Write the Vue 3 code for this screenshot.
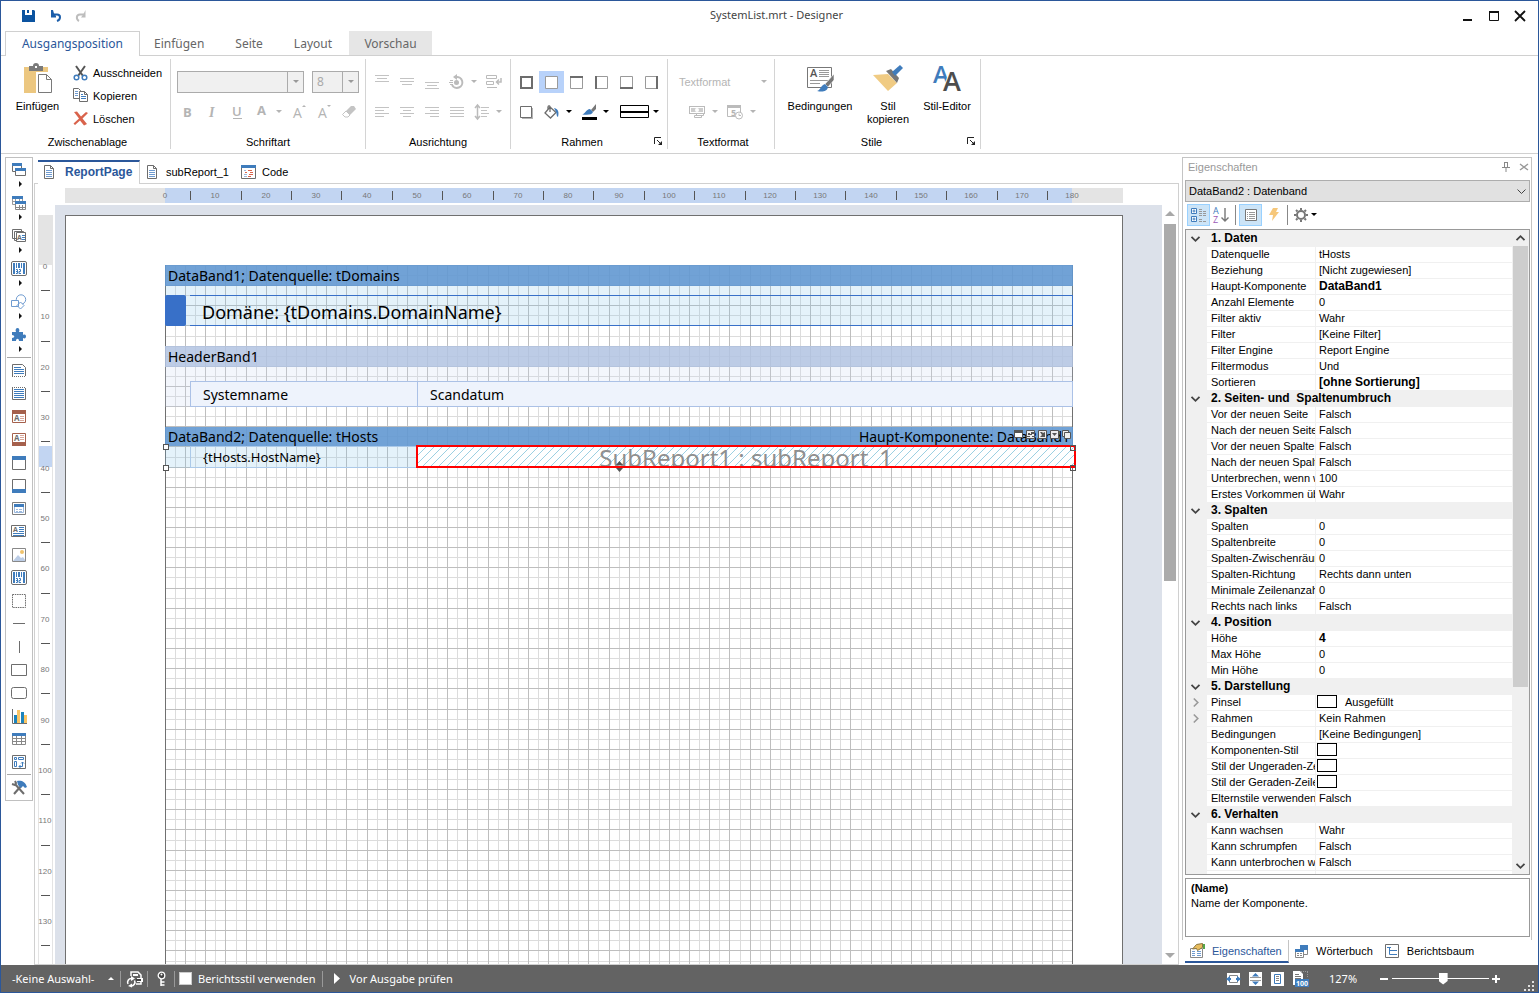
<script setup>
import { h, ref } from 'vue'

const G = '#6d6d6d'
const B = '#3f7cbc'
const L = '#c3c3c3'

const lines = (list, color, y0 = 1) =>
  list.map(([x, w], i) => `<path fill="${color}" d="M${x} ${y0 + i * 3}h${w}v1h-${w}z"/>`).join('')
const box = (t, r, b, l) =>
  `<path fill="#fff" stroke="#9a9a9a" d="M1.5 1.5h12v12h-12z"/>` +
  (t ? `<path fill="${G}" d="M1 1h13v2h-13z"/>` : '') +
  (r ? `<path fill="${G}" d="M12 1h2v13h-2z"/>` : '') +
  (b ? `<path fill="${G}" d="M1 12h13v2h-13z"/>` : '') +
  (l ? `<path fill="${G}" d="M1 1h2v13h-2z"/>` : '')
const glyph = (s, x, y, size, fill, extra = '') =>
  `<text x="${x}" y="${y}" font-family="Open Sans, sans-serif" font-size="${size}" fill="${fill}" ${extra}>${s}</text>`
const bold = 'font-weight="700"'
const barcode = `<rect x=".5" y=".5" width="15" height="14" rx="1.5" fill="#fff" stroke="${G}"/><path fill="${B}" d="M2 2h2v11h-2zM5 2h1v5h-1zM7 2h2v5h-2zM10 2h1v5h-1zM12 2h2v11h-2z"/><path stroke="${B}" fill="none" d="M5 8.500h1.500v4h-1.500M8 8.500h1.500v2h-1.500v2h2M5 10.500h1"/>`
const doc = `<path fill="#fff" stroke="${G}" d="M1.500.5h6l3 3v10h-9z"/><path fill="none" stroke="${G}" d="M7.500.5v3h3"/><path stroke="#6f9bd0" d="M3 5.500h6M3 7.500h6M3 9.500h6M3 11.500h6"/>`

const icons = {
  save: [13, 12, `<path fill="#0b53a0" d="M0 0h3v5h7V0h2l1 1v11H0z"/><path fill="#0b53a0" d="M5 0h2v3H5z"/>`],
  undo: [12, 13, `<path fill="none" stroke="#1c5eaa" stroke-width="2" d="M2 4.500h5c4 0 4 5 0 6.500"/><path fill="#1c5eaa" d="M1 0h2l1 3.500L6 6v1.500H1z"/>`],
  redo: [12, 13, `<path fill="none" stroke="#bdbdbd" stroke-width="2" d="M9 4.500H5c-4 0-4 5-1 6.500"/><path fill="#bdbdbd" d="M10.500 0v7.500H6L8.500 4z"/>`],
  min: [12, 12, `<path fill="#111" d="M1 9h9v2H1z"/>`],
  max: [12, 12, `<path fill="none" stroke="#111" d="M1.500 2.500h9v8h-9z"/><path fill="#111" d="M1 1h10v2H1z"/>`],
  close: [12, 12, `<path stroke="#111" stroke-width="1.800" d="M1 1l10 10M11 1L1 11"/>`],
  paste: [32, 32, `<path fill="#ecc780" d="M2 4h24v26H2z"/><path fill="#7a7a7a" d="M7 3h4a3 3 0 0 1 6 0h4v5H7z"/><path fill="#fff" d="M13 3h2v2h-2z"/><path fill="#fff" stroke="#fff" stroke-width="4" d="M16 11h9l5 5v14H16z"/><path fill="#fff" stroke="#7a7a7a" d="M16.500 11.500h8l5 5v13h-13zM24.500 11.500v5h5"/>`],
  cut: [16, 16, `<path fill="none" stroke="#555" stroke-width="2" d="M3 1l7 10M12 1L5 11"/><circle cx="3.500" cy="12.500" r="2.300" fill="#fff" stroke="${B}" stroke-width="1.500"/><circle cx="11.500" cy="12.500" r="2.300" fill="#fff" stroke="${B}" stroke-width="1.500"/>`],
  copy: [16, 15, `<path fill="#fff" stroke="${G}" d="M.5.5h5l2 2v8h-7z"/><path stroke="#6f9bd0" d="M2 3.500h3M2 5.500h3M2 7.500h3"/><path fill="#fff" stroke="${G}" d="M6.500 3.500h5l3 3v7h-8zM11.500 3.500v3h3"/><path stroke="${B}" d="M8 6.500h2M8 8.500h5M8 10.500h5"/>`],
  del: [16, 16, `<path fill="#d9634c" d="M1 1l3-.5 4 5L13 1l2 1-5.500 5.500L14 13l-3 1.500-4-5L2 14l-1.500-1.500L6 7.500z"/>`],
  drop: [6, 4, `<path fill="currentColor" d="M0 0h6L3 3z"/>`],
  bold: [16, 16, glyph('B', 4, 13, 13, '#b4b4b4', bold)],
  italic: [16, 16, `<text x="5" y="13" font-family="Liberation Serif, serif" font-size="14" font-style="italic" font-weight="700" fill="#b4b4b4">I</text>`],
  under: [16, 16, glyph('U', 3, 12, 13, '#b4b4b4', 'font-weight="600"') + `<path fill="#b4b4b4" d="M4 14h9v1H4z"/>`],
  color: [16, 16, glyph('A', 3, 11, 13, '#b4b4b4', bold)],
  grow: [16, 16, glyph('A', 2, 14, 14, '#b4b4b4') + `<path fill="#b4b4b4" d="M11 3h4L13 1z"/>`],
  shrink: [16, 16, glyph('A', 2, 14, 14, '#b4b4b4') + `<path fill="#b4b4b4" d="M11 1h4l-2 2z"/>`],
  eraser: [16, 16, `<path fill="#c4c4c4" d="M10 2h3l2 3-6 6-4-4z"/><path fill="#fff" stroke="#c4c4c4" d="M5 7l4 4-2 2H4l-2.500-2.500z"/>`],
  vtop: [16, 16, lines([[1, 14], [3, 10], [1, 14]], L, 1)],
  vmid: [16, 16, lines([[1, 14], [1, 14], [3, 10]], L, 4)],
  vbot: [16, 16, lines([[1, 14], [3, 10], [1, 14]], L, 8)],
  rot: [16, 16, `<path fill="none" stroke="#bbb" stroke-width="2" d="M7 3a5.500 5.500 0 1 1-4 8"/><path fill="#bbb" d="M4 3l4-3v6z"/><circle cx="7.500" cy="8.500" r="2.500" fill="#bbb"/><path stroke="#bbb" d="M1 6.500h3M0 8.500h4M1 10.500h3"/>`],
  wrap: [16, 16, `<path fill="none" stroke="#bbb" d="M.5 1.500h10v3H.5zM.5 7.500h7v3h-7zM1 13.500h10"/><path fill="none" stroke="#bbb" stroke-width="1.500" d="M15 4v4h-4M13 5.500L10.500 8l2.500 2.500"/>`],
  left: [16, 16, lines([[1, 14], [1, 9], [1, 14], [1, 9]], L, 3)],
  center: [16, 16, lines([[1, 14], [4, 8], [1, 14], [4, 8]], L, 3)],
  right: [16, 16, lines([[1, 14], [6, 9], [1, 14], [6, 9]], L, 3)],
  just: [16, 16, lines([[1, 14], [1, 14], [1, 14], [1, 14]], L, 3)],
  spacing: [16, 16, `<path fill="none" stroke="#bbb" stroke-width="1.500" d="M3.500 2v12M1 4l2.500-3L6 4M1 12l2.500 3L6 12"/><path stroke="#c3c3c3" d="M7 3.500h8M7 6.500h6M7 9.500h8M7 12.500h6"/>`],
  ball: [15, 15, `<path fill="#fff" stroke="${G}" stroke-width="2" d="M2 2h11v11H2z"/>`],
  bnone: [15, 15, box()],
  bt: [15, 15, box(1)],
  bl: [15, 15, box(0, 0, 0, 1)],
  bb: [15, 15, box(0, 0, 1)],
  br: [15, 15, box(0, 1)],
  shadow: [15, 15, `<path fill="#b4b4b4" d="M3 3h11v11H3z"/><path fill="#fff" stroke="${G}" d="M1.500 1.500h11v11h-11z"/>`],
  fill: [16, 15, `<path fill="#fff" stroke="${G}" stroke-width="1.300" d="M6 2l6 5.500L6.500 13 1 8zM6 7V1.500C5 0 3.500 1 4 4"/><path fill="${B}" d="M10 3c5 1 5 5 4 9-2-1-1-4-2-5z"/>`],
  pen: [16, 16, `<path fill="#777" d="M15 0v5l-3 3-2-2z"/><path fill="${B}" d="M9 5l3 3c-1 3-5 3-11 2.500 3-.5 4-5 8-5.500z"/><path d="M1 13h15v3H1z"/>`],
  lstyle: [30, 14, `<path fill="#fff" stroke="#000" d="M.5.5h28v12H.5z"/><path d="M1 6h28v2H1z"/>`],
  launch: [9, 9, `<path fill="none" stroke="#222" d="M.5 7V.5H7"/><path stroke="#222" d="M3 3l4 4"/><path fill="#222" d="M8 4v4H4z"/>`],
  money: [17, 16, `<path fill="#bbb" d="M0 2h16v8H0z"/><path fill="#fff" d="M1 3h14v6H1z"/><path fill="#ccc" d="M2 4h12v4H2z"/><circle cx="8" cy="6" r="2" fill="#fff"/><path fill="#fff" stroke="#bbb" d="M7.500 9.500h7v2h-7zM5.500 11.500h7v2h-7z"/>`],
  date: [17, 16, `<path fill="#fff" stroke="#bbb" d="M.5 1.500h13v11H.5z"/><path fill="#bbb" d="M0 1h14v3H0z"/>` + glyph('5', 4, 12, 9, '#b4b4b4', bold) + `<circle cx="12" cy="11.500" r="3.500" fill="#fff" stroke="#bbb"/><path fill="none" stroke="#bbb" d="M12 9.500v2h2"/>`],
  cond: [32, 32, `<path fill="#fff" stroke="#777" d="M3.500 4.500h24v20h-24z"/>` + glyph('A', 6, 14, 11, '#555', 'font-weight="600"') + `<path stroke="#999" d="M15 7.500h10M15 9.500h10M15 11.500h10M15 13.500h10M6 17.500h18M6 20.500h10"/><path fill="#777" stroke="#fff" stroke-width=".6" d="M30 11v6l-6 7-3-3z"/><path fill="${B}" d="M21 21l3 3c-1 5-6 5-11 4 4-1 3-5 8-7z"/>`],
  brush: [32, 32, `<path fill="#f0cb83" d="M1 12l15-1 9 9-9 8z"/><path fill="#777" d="M14 8l5-2 8 9-2 5z"/><path fill="${B}" d="M20 9l8-7 3 3-8 8z"/>`],
  style: [32, 32, glyph('A', 2, 20, 24, B, 'font-weight="600"') + glyph('A', 12, 28, 27, '#4d4d4d', 'font-weight="600" stroke="#fff" stroke-width="2" paint-order="stroke"')],
  doc: [12, 14, doc],
  code: [15, 14, `<path fill="#fff" stroke="${G}" d="M.5.5h14v13H.5z"/><path fill="${B}" d="M0 0h15v3H0z"/><path stroke="#d9634c" d="M7 5.500h4M4 7.500h2M9 7.500h3M8 9.500h4M7 11.500h3"/><path stroke="#9bb8dc" d="M3 5.500h2M3 9.500h3M3 11.500h3"/>`],
  arrow: [6, 6, `<path fill="#111" d="M2 0l3 3-3 3z"/>`],
  bands: [16, 16, `<path fill="#fff" stroke="${G}" d="M1.500 1.500h9v8h-9z"/><path fill="${B}" d="M1 1h10v3H1z"/><path fill="#fff" stroke="${G}" d="M4.500 6.500h10v7h-10z"/><path fill="${B}" d="M4 6h11v3H4z"/>`],
  cross: [16, 16, `<path fill="#fff" stroke="#999" d="M1.500 1.500h10v8h-10zM2 6.500h9M4.500 4v5M8.500 4v5"/><path fill="${B}" d="M1 1h11v3H1z"/><path fill="#fff" stroke="#888" d="M4.500 7.500h10v7h-10zM5 12.500h9M8.500 10v5M11.500 10v5"/><path fill="${B}" d="M4 6h11v3H4z"/>`],
  comps: [16, 16, `<path fill="#fff" stroke="${G}" d="M1.500 1.500h9v9h-9zM3.500 3.500h9v9h-9z"/><path fill="#fff" stroke="${G}" d="M5.500 4.500h9v9h-9z"/>` + glyph('A', 6, 12, 7, G, bold) + `<path stroke="${B}" d="M11 7.500h3M11 9.500h3M11 11.500h3"/>`],
  barcode: [16, 15, barcode],
  shapes: [16, 16, `<circle cx="10" cy="5.500" r="4.700" fill="#fff" stroke="#6f9bd0"/><path fill="#fff" stroke="#6f9bd0" d="M.5 6.500h7v6h-7zM9.500 8l3.500 3.500-3.500 3.500L6 11.500z"/>`],
  puzzle: [16, 16, `<path fill="${B}" d="M1 5h4c-1-2 0-4 1.500-4S9 3 8 5h4v3c2-1 3 0 3 1.500S14 12 12 11v3H8c0-3-3-3-3 0H1v-3c3 0 3-3 0-3z"/>`],
  rtitle: [16, 15, `<path fill="#fff" stroke="${G}" d="M1.500 13V1.500h10l3 3V13"/><path stroke="${G}" stroke-dasharray="1 1" d="M1 13.500h14"/><path stroke="${B}" d="M3 4.500h7M3 6.500h10M3 8.500h10M3 10.500h10"/>`],
  rsum: [16, 15, `<path fill="#fff" stroke="${G}" d="M1.500 2v11.500h13V2"/><path stroke="${G}" stroke-dasharray="1 1" d="M1 1.500h14"/><path stroke="${B}" d="M3 3.500h10M3 5.500h10M3 7.500h10M3 9.500h10M3 11.500h10"/>`],
  phead: [16, 15, `<path fill="#fff" stroke="#a5604c" d="M1.500 1.500h13v12h-13z"/><path fill="#a5604c" d="M1 1h14v4H1z"/>` + glyph('A', 3, 12, 8, G, bold) + `<path stroke="#d9a89b" d="M9 7.500h4M9 9.500h4M9 11.500h4"/>`],
  pfoot: [16, 15, `<path fill="#fff" stroke="#a5604c" d="M1.500 1.500h13v12h-13z"/><path fill="#a5604c" d="M1 10h14v4H1z"/>` + glyph('A', 3, 9, 8, G, bold) + `<path stroke="#d9a89b" d="M9 3.500h4M9 5.500h4M9 7.500h4"/>`],
  head: [16, 16, `<path fill="#fff" stroke="${G}" d="M1.500 1.500h13v13h-13z"/><path fill="${B}" d="M1 1h14v4H1z"/>`],
  foot: [16, 16, `<path fill="#fff" stroke="${G}" d="M1.500 1.500h13v13h-13z"/><path fill="${B}" d="M1 11h14v4H1z"/>`],
  child: [16, 15, `<path fill="#fff" stroke="#7d7d7d" d="M1.500 1.500h13v12h-13z"/><path fill="#fff" stroke="#9bb8dc" d="M3.500 3.500h9v8h-9z"/><path fill="${B}" d="M3 3h10v3H3z"/><path stroke="#9bb8dc" d="M5 8.500h2M8 8.500h3M5 10.500h2M8 10.500h3"/>`],
  text: [16, 15, `<path fill="#fff" stroke="${G}" d="M.5 1.500h14v11H.5z"/>` + glyph('A', 2, 8, 7, G, bold) + `<path stroke="${B}" d="M8 3.500h5M8 5.500h5M8 7.500h5M2 9.500h11M2 11.500h11"/>`],
  image: [16, 16, `<path fill="#fff" stroke="#888" d="M1.500 1.500h13v13h-13z"/><circle cx="11" cy="5" r="2" fill="#f0c36d"/><path fill="#bccde6" d="M2 14l5-6 3 3 2-1 2 3v1z"/>`],
  panel: [16, 16, `<path fill="none" stroke="${G}" stroke-dasharray="1.500 .8" d="M1.500 1.500h13v13h-13z"/>`],
  hline: [16, 16, `<path fill="${G}" d="M2 7h12v1H2z"/>`],
  vline: [16, 16, `<path fill="${G}" d="M8 2h1v12H8z"/>`],
  rect: [16, 16, `<path fill="#fff" stroke="${G}" d="M.5 2.500h15v11H.5z"/>`],
  round: [16, 16, `<rect x=".5" y="2.500" width="15" height="11" rx="2" fill="#fff" stroke="${G}"/>`],
  chart: [16, 16, `<path fill="#1c84bd" d="M3 7h3v8H3zM10 4h3v11h-3z"/><path fill="#fbc564" d="M6 2h3v13H6zM13 7h3v8h-3z"/><path fill="none" stroke="${G}" d="M1.500 1v14.500H16"/>`],
  table: [16, 16, `<path fill="#fff" stroke="#888" d="M1.500 3.500h13v10h-13zM1 7.500h13M1 10.500h13M5.500 4v9M10.500 4v9"/><path fill="${B}" d="M1 2h14v3H1z"/>`],
  sub: [16, 16, `<path fill="#fff" stroke="${G}" d="M1.500 1.500h13v13h-13z"/><path fill="none" stroke="${B}" d="M3.500 3.500h2v2h-2zM7.500 3.500h5v2h-5zM3.500 7.500h2v5h-2zM8 12.500h3.500V8M10 9.500L11.500 8 13 9.500M9.500 11L8 12.500 9.500 14"/>`],
  tools: [16, 16, `<path stroke="${G}" stroke-width="2" d="M4 4l9 10"/><path fill="none" stroke="${G}" stroke-width="2" d="M1 4l3 1 1-2L4 1"/><path stroke="${G}" stroke-width="2" d="M10 6L3 14"/><path fill="${B}" d="M6 1c4-1 8 0 10 6l-2 1-2-2-2 2-3-3z"/>`],
  pin: [8, 10, `<path fill="none" stroke="#888" d="M2.500 0v5.500M5.500 0v5.500M2 .5h4M0 5.500h8M4 6v4"/>`],
  x: [8, 8, `<path stroke="#999" stroke-width="1.400" d="M0 1l8 6M8 1L0 7"/>`],
  cat: [17, 16, `<path fill="#fff" stroke="${B}" d="M1.500 1.500h5v5h-5zM1.500 9.500h5v5h-5z"/><path stroke="${B}" d="M2.500 4h3M4 2.500v3M2.500 12h3M4 10.500v3"/><path stroke="#999" stroke-dasharray="3 1" d="M9 2.500h3M9 4.500h8M9 6.500h8M9 8.500h8M9 12.500h3M9 14.500h8"/>`],
  sort: [17, 16, glyph('A', 0, 7, 9, B) + glyph('Z', 0, 16, 9, '#9b59b6') + `<path fill="none" stroke="#777" stroke-width="1.400" d="M12 1v13M8.500 10.500L12 14l3.500-3.500"/>`],
  props: [14, 14, `<path fill="#fff" stroke="#777" d="M1.500 1.500h11v11h-11z"/><path stroke="#999" d="M3 4.500h1M5 4.500h6M3 6.500h1M5 6.500h6M3 8.500h1M5 8.500h6M3 10.500h1M5 10.500h6"/>`],
  bolt: [10, 14, `<path fill="#f6c77a" d="M4 0h5L7 4h3L3 13l1-6H0z"/>`],
  gear: [14, 14, `<circle cx="7" cy="7" r="4" fill="none" stroke="#777" stroke-width="2"/><path stroke="#777" stroke-width="2" d="M7 0v2M7 12v2M0 7h2M12 7h2M2 2l1.500 1.500M10.500 10.500L12 12M12 2l-1.500 1.500M3.500 10.500L2 12"/>`],
  chevD: [9, 6, `<path fill="none" stroke="currentColor" stroke-width="1.800" d="M.5.800l4 4 4-4"/>`],
  chevU: [9, 6, `<path fill="none" stroke="currentColor" stroke-width="1.800" d="M.5 5.200l4-4 4 4"/>`],
  chevT: [9, 6, `<path fill="none" stroke="#444" d="M.5.5l4 4 4-4"/>`],
  chevR: [9, 9, `<path fill="none" stroke="#999" stroke-width="1.600" d="M2.800.5l4 4-4 4"/>`],
  tabProps: [17, 16, `<path fill="#fff" stroke="#888" d="M1.500 5.500h12v9h-12z"/><path stroke="#6f9bd0" d="M3 8.500h3M8 8.500h4M3 10.500h3M8 10.500h4M3 12.500h3M8 12.500h4"/><path fill="#e9bd5e" stroke="#8a7640" d="M3.500 6l4-4.500 6-1v4l-5 3-1-2z"/><path fill="#57a64a" d="M14 1h2v5h-2z"/>`],
  tabDict: [13, 13, `<path fill="#fff" stroke="#888" d="M5.500 1.500h7v8h-7z"/><path fill="${B}" d="M5 0h8v5H5z"/><path fill="#fff" stroke="#888" d="M.5 4.500h8v8h-8z"/><path fill="${B}" d="M0 4h9v3H0z"/><path stroke="#888" d="M2 8.500h2M5 8.500h2M2 10.500h2M5 10.500h2"/>`],
  tabTree: [14, 14, `<path fill="#fff" stroke="${G}" d="M.5.5h13v13H.5z"/><path fill="none" stroke="${B}" d="M2 3.500h4M4.500 4v6.500H7M4.500 6.500H7"/><path fill="${B}" d="M7 6h5v1H7zM7 10h5v1H7z"/>`],
  up: [6, 4, `<path fill="#fff" d="M0 3h6L3 0z"/>`],
  reload: [17, 16, `<path fill="none" stroke="#fff" stroke-width="1.500" d="M5 5V1h7l3 3v9h-5"/><path fill="#fff" d="M7 3h5v2H7zM11 7h6v4h-6z"/><path fill="#444" d="M10 8h5v2h-5z"/><path fill="none" stroke="#fff" stroke-width="1.500" d="M2 13a3.800 3.800 0 0 1 3.500-5.500M8.500 9.500A3.800 3.800 0 0 1 5 15"/><path fill="#fff" d="M5 5l4 2.500L5 10zM6 12.500L2 15l4 1.500z"/>`],
  key: [9, 16, `<circle cx="4.500" cy="4.500" r="3.300" fill="#444" stroke="#fff" stroke-width="1.300"/><circle cx="4.500" cy="3.500" r="1" fill="#fff"/><path fill="none" stroke="#fff" stroke-width="1.500" d="M4 8v7M4 11h3.500M4 14h3.500"/>`],
  play: [6, 11, `<path fill="#fff" d="M0 0l6 5.500L0 11z"/>`],
  fitw: [15, 14, `<path fill="#fff" d="M1 1h13v12H1z"/><path fill="#fff" stroke="#888" d="M3.500 3.500h8v7h-8z"/><path fill="${B}" d="M0 7l4-3v2h7V4l4 3-4 3V8H4v2z"/><path fill="#fff" d="M5 6h5v2H5z"/>`],
  fith: [15, 14, `<path fill="#fff" d="M1 0h13v14H1z"/><path stroke="#999" d="M2 5.500h11M2 8.500h11"/><path fill="${B}" d="M7.500 1L11 4.500H4zM7.500 13L4 9.500h7z"/>`],
  fitp: [15, 14, `<path fill="#fff" d="M1 0h13v14H1z"/><path fill="none" stroke="${B}" d="M4.500 2.500h6v9h-6z"/><path stroke="#888" d="M6 4.500h3M6 6.500h3M6 8.500h3"/>`],
  fit100: [17, 16, `<path fill="#fff" d="M1 0h7l3 3v11H1z"/><path stroke="#777" d="M3 3.500h4M3 5.500h6M3 7.500h6"/><path stroke="#999" stroke-dasharray="1 1" d="M9 .5h7M15.500 1v6"/><path fill="${B}" d="M3 8h14v8H3z"/>` + glyph('100', 4, 15, 7, '#fff', bold)],
  grip: [12, 12, `<path fill="#e0e0e0" d="M9 1h2v2H9zM5 5h2v2H5zM9 5h2v2H9zM1 9h2v2H1zM5 9h2v2H5zM9 9h2v2H9z"/>`],
  triU: [10, 6, `<path fill="#a8a8a8" d="M0 5h10L5 0z"/>`],
  triD: [10, 6, `<path fill="#a8a8a8" d="M0 0h10L5 5z"/>`],
  a1: [9, 9, `<path fill="#fff" stroke="#555" d="M.5.5h8v7h-8z"/><path fill="#555" d="M0 0h9v3H0z"/>`],
  a2: [9, 9, `<path fill="#eee" stroke="#555" d="M.5.5h8v8h-8z"/><path fill="#555" d="M2 3h2v2H2zM5 2h3v2H5zM4 4h2v1H4zM1 6h3v1H1zM6 6h2v1H6z"/>`],
  a3: [9, 9, `<path fill="#eee" stroke="#555" d="M.5.5h8v8h-8z"/><path fill="#555" d="M2 2h2l1 1 2-1v5H2l2-2z"/>`],
  a4: [9, 9, `<path fill="#eee" stroke="#555" d="M.5.5h8v8h-8z"/><path fill="#555" d="M2 3h5L4.500 6z"/>`],
  a5: [9, 9, `<path fill="#eee" stroke="#555" d="M.5.5h6v6h-6z"/><path fill="#eee" stroke="#555" d="M2.500 2.500h6v6h-6z"/>`],
  vresize: [9, 11, `<path fill="#555" d="M4.500 0L8 4H1zM4.500 11L8 7H1z"/>`]
}

const Icon = (p) => {
  const [w, ht, body] = icons[p.name]
  return h('svg', { class: 'ico', width: w, height: ht, viewBox: `0 0 ${w} ${ht}`, 'aria-hidden': 'true', innerHTML: body })
}
Icon.props = ['name']

/* Drawing scale of the report surface: pixels per millimetre at 127 % */
const scale = 5.04
const mm = (v) => Math.round(v * scale)
const pageW = mm(210)
const pageH = mm(297)
const areaW = mm(180) + 1
const areaH = pageH - 100
const gridPath = (odd) => {
  let d = ''
  for (let i = odd; i <= 90; i += 2) d += `M${mm(i * 2)} 0h1v${areaH}h-1z`
  for (let i = odd; mm(i * 2) < areaH; i += 2) d += `M0 ${mm(i * 2)}h${areaW}v1H0z`
  return d
}
const hLabels = Array.from({ length: 19 }, (_, i) => i * 10)
const hTicks = Array.from({ length: 18 }, (_, i) => i * 10 + 5)
const vLabels = Array.from({ length: 14 }, (_, i) => i * 10)

const toolGroups = ['bands', 'cross', 'comps', 'barcode', 'shapes', 'puzzle']
const tools = ['rtitle', 'rsum', 'phead', 'pfoot', 'head', 'foot', 'child', 'text', 'image', 'barcode', 'panel', 'hline', 'vline', 'rect', 'round', 'chart', 'table', 'sub']

const tabs = ['Ausgangsposition', 'Einfügen', 'Seite', 'Layout', 'Vorschau']
const zoom = ref(53)
const bandActions = ['a1', 'a2', 'a3', 'a4', 'a5']

const sections = [
  { t: '1. Daten', rows: [['Datenquelle', 'tHosts'], ['Beziehung', '[Nicht zugewiesen]'], ['Haupt-Komponente', 'DataBand1', 'b'], ['Anzahl Elemente', '0'], ['Filter aktiv', 'Wahr'], ['Filter', '[Keine Filter]'], ['Filter Engine', 'Report Engine'], ['Filtermodus', 'Und'], ['Sortieren', '[ohne Sortierung]', 'b']] },
  { t: '2. Seiten- und  Spaltenumbruch', rows: [['Vor der neuen Seite', 'Falsch'], ['Nach der neuen Seite', 'Falsch'], ['Vor der neuen Spalte', 'Falsch'], ['Nach der neuen Spalt', 'Falsch'], ['Unterbrechen, wenn w', '100'], ['Erstes Vorkommen üb', 'Wahr']] },
  { t: '3. Spalten', rows: [['Spalten', '0'], ['Spaltenbreite', '0'], ['Spalten-Zwischenräum', '0'], ['Spalten-Richtung', 'Rechts dann unten'], ['Minimale Zeilenanzahl', '0'], ['Rechts nach links', 'Falsch']] },
  { t: '4. Position', rows: [['Höhe', '4', 'b'], ['Max Höhe', '0'], ['Min Höhe', '0']] },
  { t: '5. Darstellung', rows: [['Pinsel', 'Ausgefüllt', 's', 1], ['Rahmen', 'Kein Rahmen', '', 1], ['Bedingungen', '[Keine Bedingungen]'], ['Komponenten-Stil', '', 's'], ['Stil der Ungeraden-Ze', '', 's'], ['Stil der Geraden-Zeilen', '', 's'], ['Elternstile verwenden', 'Falsch']] },
  { t: '6. Verhalten', rows: [['Kann wachsen', 'Wahr'], ['Kann schrumpfen', 'Falsch'], ['Kann unterbrochen we', 'Falsch'], ['Aktiviert', 'Wahr']] }
]
</script>

<template>
  <div class="win">
    <header class="title">
      <div class="quick">
        <button aria-label="Speichern"><Icon name="save" /></button>
        <button aria-label="Rückgängig"><Icon name="undo" /></button>
        <button aria-label="Wiederholen" disabled><Icon name="redo" /></button>
      </div>
      <h1>SystemList.mrt - Designer</h1>
      <div class="sys">
        <button aria-label="Minimieren"><Icon name="min" /></button>
        <button aria-label="Maximieren"><Icon name="max" /></button>
        <button aria-label="Schließen"><Icon name="close" /></button>
      </div>
    </header>

    <nav class="tabs">
      <button v-for="(t, i) in tabs" :key="t" :class="{ on: i === 0, preview: i === 4 }">{{ t }}</button>
    </nav>

    <div class="ribbon">
      <section class="grp clip">
        <div class="body">
          <button class="big"><Icon name="paste" />Einfügen</button>
          <div class="stack">
            <button><Icon name="cut" />Ausschneiden</button>
            <button><Icon name="copy" />Kopieren</button>
            <button><Icon name="del" />Löschen</button>
          </div>
        </div>
        <footer>Zwischenablage</footer>
      </section>

      <section class="grp font">
        <div class="rows">
          <div class="row combos">
            <span class="combo wide"><select aria-label="Schriftart" disabled><option></option></select><i><Icon name="drop" /></i></span>
            <span class="combo"><select aria-label="Schriftgröße" disabled><option>8</option></select><i><Icon name="drop" /></i></span>
          </div>
          <div class="row dim">
            <button aria-label="Fett"><Icon name="bold" /></button>
            <button aria-label="Kursiv"><Icon name="italic" /></button>
            <button aria-label="Unterstrichen"><Icon name="under" /></button>
            <button aria-label="Schriftfarbe"><Icon name="color" /></button>
            <button class="dd" aria-label="Farbauswahl"><Icon name="drop" /></button>
            <button aria-label="Größer"><Icon name="grow" /></button>
            <button aria-label="Kleiner"><Icon name="shrink" /></button>
            <button aria-label="Format löschen"><Icon name="eraser" /></button>
          </div>
        </div>
        <footer>Schriftart</footer>
      </section>

      <section class="grp align">
        <div class="rows">
          <div class="row dim">
            <button aria-label="Oben"><Icon name="vtop" /></button>
            <button aria-label="Mitte"><Icon name="vmid" /></button>
            <button aria-label="Unten"><Icon name="vbot" /></button>
            <button aria-label="Drehen"><Icon name="rot" /></button>
            <button class="dd" aria-label="Drehwinkel"><Icon name="drop" /></button>
            <button aria-label="Umbruch"><Icon name="wrap" /></button>
          </div>
          <div class="row dim">
            <button aria-label="Links"><Icon name="left" /></button>
            <button aria-label="Zentriert"><Icon name="center" /></button>
            <button aria-label="Rechts"><Icon name="right" /></button>
            <button aria-label="Blocksatz"><Icon name="just" /></button>
            <button aria-label="Zeilenabstand"><Icon name="spacing" /></button>
            <button class="dd" aria-label="Abstand wählen"><Icon name="drop" /></button>
          </div>
        </div>
        <footer>Ausrichtung</footer>
      </section>

      <section class="grp frame">
        <div class="rows">
          <div class="row">
            <button aria-label="Alle Rahmen"><Icon name="ball" /></button>
            <button class="sel" aria-label="Kein Rahmen"><Icon name="bnone" /></button>
            <button aria-label="Rahmen oben"><Icon name="bt" /></button>
            <button aria-label="Rahmen links"><Icon name="bl" /></button>
            <button aria-label="Rahmen unten"><Icon name="bb" /></button>
            <button aria-label="Rahmen rechts"><Icon name="br" /></button>
          </div>
          <div class="row">
            <button aria-label="Schatten"><Icon name="shadow" /></button>
            <button aria-label="Füllung"><Icon name="fill" /></button>
            <button class="dd" aria-label="Füllfarbe"><Icon name="drop" /></button>
            <button aria-label="Rahmenfarbe"><Icon name="pen" /></button>
            <button class="dd" aria-label="Farbe wählen"><Icon name="drop" /></button>
            <button class="line" aria-label="Linienart"><Icon name="lstyle" /><Icon name="drop" /></button>
          </div>
        </div>
        <footer>Rahmen</footer>
        <button class="launch" aria-label="Rahmenoptionen"><Icon name="launch" /></button>
      </section>

      <section class="grp fmt">
        <div class="rows">
          <div class="row dim"><button class="txt">Textformat<Icon name="drop" /></button></div>
          <div class="row dim pad">
            <button aria-label="Währung"><Icon name="money" /></button>
            <button class="dd" aria-label="Währung wählen"><Icon name="drop" /></button>
            <button aria-label="Datum"><Icon name="date" /></button>
            <button class="dd" aria-label="Datum wählen"><Icon name="drop" /></button>
          </div>
        </div>
        <footer>Textformat</footer>
      </section>

      <section class="grp styles">
        <div class="body">
          <button class="big"><Icon name="cond" />Bedingungen</button>
          <button class="big"><Icon name="brush" />Stil<br>kopieren</button>
          <button class="big"><Icon name="style" />Stil-Editor</button>
        </div>
        <footer>Stile</footer>
        <button class="launch" aria-label="Stiloptionen"><Icon name="launch" /></button>
      </section>
    </div>

    <main class="work">
      <aside class="toolbox">
        <template v-for="t in toolGroups" :key="t">
          <button :aria-label="t"><Icon :name="t" /></button>
          <span class="more"><Icon name="arrow" /></span>
        </template>
        <hr>
        <button v-for="t in tools" :key="t" :aria-label="t"><Icon :name="t" /></button>
        <hr>
        <button aria-label="Werkzeuge"><Icon name="tools" /></button>
      </aside>

      <section class="designer">
        <nav class="docs">
          <button class="on"><Icon name="doc" />ReportPage</button>
          <button><Icon name="doc" />subReport_1</button>
          <button><Icon name="code" />Code</button>
        </nav>
        <div class="surface">
          <div class="hruler">
            <svg :width="pageW" height="15">
              <rect class="off" width="100%" height="15" />
              <rect class="act" x="100" :width="areaW - 1" height="15" />
              <path v-for="t in hTicks" :key="t" class="tick" :d="`M${100 + mm(t)} 3h1v9h-1z`" />
              <text v-for="t in hLabels" :key="t" :x="100 + mm(t)" y="10">{{ t }}</text>
            </svg>
          </div>
          <div class="vruler">
            <svg width="15" :height="pageH">
              <rect class="off" width="15" height="50" />
              <rect class="act" y="231" width="15" height="21" />
              <path class="edge" :d="`M0 0h1v${pageH}h-1zM14 0h1v${pageH}h-1z`" />
              <path v-for="t in vLabels" :key="t" class="tick" :d="`M3 ${50 + mm(t + 5)}h9v1h-9z`" />
              <text v-for="t in vLabels" :key="t" x="7" :y="54 + mm(t)">{{ t }}</text>
            </svg>
          </div>
          <div class="canvas">
            <div class="page" :style="{ width: pageW + 'px', height: pageH + 'px' }">
              <div class="area">
                <svg class="grid" :width="areaW" :height="areaH">
                  <path class="minor" :d="gridPath(1)" />
                  <path class="major" :d="gridPath(0)" />
                  <path class="limit" :d="`M0 0h1v${areaH}h-1zM${areaW - 1} 0h1v${areaH}h-1z`" />
                </svg>
                <div class="band data">
                  <div class="bh">DataBand1; Datenquelle: tDomains</div>
                  <div class="bc">
                    <span class="mark"></span>
                    <div class="cell domain">Domäne: {tDomains.DomainName}</div>
                  </div>
                </div>
                <div class="band headb">
                  <div class="bh">HeaderBand1</div>
                  <div class="bc">
                    <div class="cell h1c">Systemname</div>
                    <div class="cell h2c">Scandatum</div>
                  </div>
                </div>
                <div class="band data second">
                  <div class="bh"><span>DataBand2; Datenquelle: tHosts</span><span>Haupt-Komponente: DataBand1</span></div>
                  <div class="bc">
                    <div class="cell host">{tHosts.HostName}</div>
                    <div class="subrep">
                      <svg width="100%" height="100%">
                        <defs><pattern id="hatch" width="8" height="8" patternUnits="userSpaceOnUse"><path d="M-1 9L9-1M-1 1l2-2M7 9l2-2" /></pattern></defs>
                        <rect width="100%" height="100%" fill="url(#hatch)" />
                      </svg>
                      <span>SubReport1 : subReport_1</span>
                    </div>
                    <i class="knob tl"></i><i class="knob bl"></i><i class="knob tr"></i><i class="knob br"></i>
                    <span class="vres"><Icon name="vresize" /></span>
                  </div>
                  <div class="acts"><Icon v-for="a in bandActions" :key="a" :name="a" /></div>
                </div>
              </div>
            </div>
          </div>
          <div class="vscroll">
            <Icon name="triU" /><div class="track"><div class="thumb"></div></div><Icon name="triD" />
          </div>
        </div>
      </section>

      <aside class="side">
        <div class="panel">
          <div class="ph"><h2>Eigenschaften</h2><button aria-label="Anheften"><Icon name="pin" /></button><button aria-label="Panel schließen"><Icon name="x" /></button></div>
          <div class="picker">
            <select aria-label="Komponente"><option>DataBand2 : Datenband</option></select>
            <Icon name="chevT" />
          </div>
          <div class="ptools">
            <button class="on" aria-label="Nach Kategorien"><Icon name="cat" /></button>
            <button aria-label="Alphabetisch"><Icon name="sort" /></button>
            <i></i>
            <button class="on" aria-label="Eigenschaften"><Icon name="props" /></button>
            <button aria-label="Ereignisse"><Icon name="bolt" /></button>
            <i></i>
            <button class="gear" aria-label="Einstellungen"><Icon name="gear" /><Icon name="drop" /></button>
          </div>
          <div class="pgrid">
            <div class="scroller">
              <table>
                <colgroup><col class="c0"><col class="c1"><col></colgroup>
                <tbody v-for="s in sections" :key="s.t">
                  <tr class="sec"><td><Icon name="chevD" /></td><th colspan="2">{{ s.t }}</th></tr>
                  <tr v-for="r in s.rows" :key="r[0]">
                    <td><Icon v-if="r[3]" name="chevR" /></td>
                    <td class="lab">{{ r[0] }}</td>
                    <td class="val" :class="{ b: r[2] === 'b', s: r[2] === 's' }"><i v-if="r[2] === 's'"></i>{{ r[1] }}</td>
                  </tr>
                </tbody>
              </table>
            </div>
            <div class="pscroll"><Icon name="chevU" /><div class="track"><div class="thumb"></div></div><Icon name="chevD" /></div>
          </div>
          <div class="desc"><b>(Name)</b><p>Name der Komponente.</p></div>
        </div>
        <nav class="ptabs">
          <button class="on"><Icon name="tabProps" />Eigenschaften</button>
          <button><Icon name="tabDict" />Wörterbuch</button>
          <button><Icon name="tabTree" />Berichtsbaum</button>
        </nav>
      </aside>
    </main>

    <footer class="status">
      <button class="first">-Keine Auswahl-<Icon name="up" /></button>
      <button class="ib" aria-label="Aktualisieren"><Icon name="reload" /></button>
      <button class="ib" aria-label="Schlüssel"><Icon name="key" /></button>
      <label><input type="checkbox">Berichtsstil verwenden</label>
      <button class="check"><Icon name="play" />Vor Ausgabe prüfen</button>
      <div class="views">
        <button aria-label="Seitenbreite"><Icon name="fitw" /></button>
        <button aria-label="Seitenhöhe"><Icon name="fith" /></button>
        <button aria-label="Ganze Seite"><Icon name="fitp" /></button>
        <button aria-label="100 Prozent"><Icon name="fit100" /></button>
      </div>
      <output>127%</output>
      <button class="step minus" aria-label="Verkleinern"></button>
      <input v-model="zoom" class="range" type="range" min="0" max="100" aria-label="Zoom">
      <button class="step plus" aria-label="Vergrößern"></button>
      <span class="grip"><Icon name="grip" /></span>
    </footer>
  </div>
</template>

<style>
html, body { margin: 0; overflow: hidden; }
</style>

<style scoped>
.win { box-sizing: border-box; height: 100vh; border: 1px solid #2b579a; background: #fff; display: flex; flex-direction: column; font: 11px/14px "Liberation Sans", Arial, sans-serif; color: #000; overflow: hidden; }
.win * { box-sizing: border-box; }
button { border: 0; background: none; padding: 0; margin: 0; font: inherit; color: inherit; display: inline-flex; align-items: center; justify-content: center; }
.ico { display: block; flex: none; overflow: visible; }
h1, h2, p { margin: 0; font-weight: normal; }

.title { height: 30px; flex: none; display: grid; grid-template-columns: 1fr auto 1fr; align-items: center; font-family: "Noto Sans", sans-serif; }
.title h1 { font-size: 11px; line-height: 16px; color: #444; padding: 0 0 2px 14px; }
.quick { display: flex; padding-left: 21px; gap: 15px; }
.quick button:last-child { margin-left: -2px; }
.sys { display: flex; justify-content: flex-end; gap: 14px; padding-right: 12px; }

.tabs { height: 25px; flex: none; display: flex; border-bottom: 1px solid #d0d0d0; padding-left: 4px; font: 12px/16px "Noto Sans", sans-serif; color: #666; }
.tabs button { height: 24px; padding: 1px 14px 0; }
.tabs button:nth-child(3) { padding: 1px 17px 0; }
.tabs .on { height: 25px; border: 1px solid #d0d0d0; border-bottom: 0; background: #fff; color: #2b579a; width: 135px; padding: 0; }
.tabs .preview { background: #e6e6e6; width: 83px; margin-left: 3px; padding: 1px 0 0; }

.ribbon { height: 98px; flex: none; display: flex; border-bottom: 1px solid #d0d0d0; padding-top: 3px; }
.grp { position: relative; height: 90px; border-right: 1px solid #d4d4d4; display: flex; flex-direction: column; }
.grp > footer { height: 14px; text-align: center; }
.body { flex: 1; display: flex; }
.big { flex-direction: column; justify-content: flex-start; line-height: 13px; padding-top: 4px; }
.big .ico { margin-bottom: 5px; }
.clip { width: 170px; }
.clip .big { width: 73px; }
.clip > footer { padding-left: 4px; }
.stack { padding-top: 2px; margin-left: -1px; }
.stack button { display: flex; height: 23px; gap: 4px; justify-content: flex-start; }
.stack .ico { width: 16px; }
.rows { flex: 1; padding: 12px 2px 0 3px; }
.row { height: 22px; margin-bottom: 8px; display: flex; }
.row button { width: 25px; height: 22px; }
.row .dd { width: 12px; padding-right: 3px; }
.row .sel { background: #b8d2fa; }
.dim { color: #b4b4b4; }
.font { width: 195px; }
.combos { gap: 8px; padding-left: 3px; }
.combo { position: relative; width: 47px; height: 22px; display: block; }
.combo.wide { width: 127px; }
.combo select { appearance: none; width: 100%; height: 22px; border: 1px solid #ababab; border-radius: 0; background: #f0f0f0; color: #aaa; opacity: 1; padding: 0 4px; font: 12px/16px "Noto Sans", sans-serif; margin: 0; }
.combo i { position: absolute; right: 0; top: 0; width: 17px; height: 22px; border: 1px solid #ababab; display: flex; align-items: center; justify-content: center; color: #999; }
.align { width: 145px; }
.frame { width: 157px; }
.frame > footer { padding-right: 14px; }
.frame .row .line { width: 44px; gap: 3px; margin-left: 4px; }
.fmt { width: 107px; }
.fmt > footer { padding-left: 4px; }
.fmt .txt { width: 88px; justify-content: space-between; margin-left: 8px; }
.fmt .pad { padding-left: 14px; }
.fmt .pad .dd { margin-right: 1px; }
.styles { width: 206px; padding-left: 10px; }
.styles .big { width: 70px; }
.styles .big:nth-child(2) { width: 66px; }
.styles .big:nth-child(3) { width: 52px; }
.styles > footer { padding-right: 22px; }
.launch { position: absolute; right: 4px; bottom: 3px; }

.work { flex: 1; min-height: 0; display: flex; }
.toolbox { align-self: flex-start; width: 28px; margin: 3px 0 0 4px; border: 1px solid #c0c0c0; display: flex; flex-direction: column; align-items: center; padding-bottom: 1px; flex: none; }
.toolbox button { width: 26px; height: 23px; }
.more { height: 10px; padding-left: 2px; }
.toolbox hr { width: 24px; border: 0; border-top: 1px solid #a8a8a8; margin: 1px 0; }

.designer { flex: 1; min-width: 0; display: flex; flex-direction: column; margin-left: 1px; }
.docs { height: 30px; flex: none; display: flex; align-items: flex-end; padding: 0 0 0 4px; border-bottom: 1px solid #d0d0d0; margin-right: 3px; }
.docs button { height: 24px; justify-content: flex-start; padding: 1px 6px 0; gap: 8px; }
.docs .on { width: 102px; padding: 0 0 2px 5px; gap: 10px; margin-bottom: -1px; background: #fff; border-top: 2px solid #2b579a; border-right: 1px solid #d0d0d0; color: #2b579a; font-weight: bold; font-size: 12px; }
.docs button:last-child { gap: 6px; }
.surface { flex: 1; min-height: 0; display: grid; grid-template: 21px 1fr / 20px 1fr 16px; border: 1px solid #d0d0d0; border-top: 0; margin-right: 3px; }
.hruler { grid-column: 2; padding: 4px 0 0 10px; overflow: hidden; }
.hruler svg, .vruler svg { display: block; }
.vruler { grid-column: 1; grid-row: 2; padding: 10px 0 0 3px; overflow: hidden; }
.off { fill: #e4e4e4; }
.act { fill: #c2d5f2; }
.edge { fill: #e4e4e4; }
.tick { fill: #555; }
text { font: 8px "Liberation Sans", Arial, sans-serif; fill: #777; text-anchor: middle; }
.canvas { grid-column: 2; grid-row: 2; background: #dce1ea; padding: 10px 0 0 10px; overflow: hidden; }
.page { background: #fff; border: 1px solid #707070; padding: 49px 0 0 99px; }
.area { position: relative; display: flex; flex-direction: column; gap: 20px; width: 908px; font-family: "Noto Sans", sans-serif; }
.grid { position: absolute; left: 0; top: 0; shape-rendering: crispEdges; }
.minor { fill: #dcdcdc; }
.major { fill: #bebebe; }
.limit { fill: #707070; }
.band { position: relative; }
.bh { height: 21px; font-size: 14px; line-height: 21px; padding: 0 3px; display: flex; justify-content: space-between; white-space: pre; }
.bc { position: relative; height: 40px; }
.data .bh { background: rgba(98, 152, 210, .9); }
.data .bc { background: rgba(120, 190, 230, .2); }
.headb .bh { background: rgba(178, 196, 226, .86); }
.headb .bc { background: rgba(200, 212, 240, .22); }
.second .bh { height: 19px; line-height: 19px; }
.second .bc { height: 22px; }
.cell { position: absolute; left: 25px; white-space: pre; padding-left: 12px; }
.mark { position: absolute; left: 0; top: 9px; width: 21px; height: 31px; background: #3870c8; border-radius: 2px; }
.domain { top: 9px; right: 0; height: 31px; border: 1px solid #3870c8; border-left: 0; font-size: 18px; line-height: 33px; }
.h1c, .h2c { top: 14px; height: 26px; width: 228px; border: 1px solid #abc1e6; background: #eef3fc; font-size: 14px; line-height: 26px; }
.h2c { left: 252px; width: 656px; }
.host { top: 0; width: 227px; height: 22px; border: 1px solid #abc9e8; font-size: 13px; line-height: 20px; }
.subrep { position: absolute; left: 251px; right: -3px; top: -1px; height: 23px; border: 2px solid #f00; background: #fff; overflow: hidden; display: flex; justify-content: center; }
.subrep svg { position: absolute; left: 0; top: 0; }
pattern path { stroke: #9dd0e2; stroke-width: 1; fill: none; }
.subrep span { position: relative; font-size: 24px; line-height: 22px; color: #8f8f8f; white-space: pre; }
.knob { position: absolute; width: 6px; height: 6px; background: #fff; border: 1px solid #555; }
.tl { left: -2px; top: -2px; }
.bl { left: -2px; bottom: -3px; }
.tr { right: -3px; top: -1px; background: none; }
.br { right: -3px; bottom: -3px; background: none; }
.vres { position: absolute; left: 450px; top: 15px; }
.acts { position: absolute; right: 2px; top: 3px; display: flex; gap: 3px; }
.vscroll { grid-column: 3; grid-row: 2; display: flex; flex-direction: column; align-items: center; padding: 6px 0 5px 0; }
.vscroll .track { flex: 1; width: 12px; padding-top: 7px; }
.vscroll .thumb { height: 49%; background: #ababab; }

.side { width: 356px; flex: none; padding: 3px 6px 0 0; display: flex; flex-direction: column; }
.panel { flex: 1; min-height: 0; border: 1px solid #c4c4c4; border-bottom: 0; padding: 0 1px 0 2px; display: flex; flex-direction: column; width: 350px; }
.ph { height: 22px; flex: none; display: flex; align-items: center; gap: 10px; padding: 0 2px 4px 3px; }
.ph h2 { flex: 1; font-size: 11px; color: #999; }
.picker { position: relative; flex: none; }
.picker select { display: block; appearance: none; width: 100%; height: 22px; border: 1px solid #adadad; border-radius: 0; background: #e1e1e1; font: 11px/14px "Liberation Sans", Arial, sans-serif; color: #000; padding: 0 3px; margin: 0; }
.picker .ico { position: absolute; right: 4px; top: 9px; }
.ptools { height: 27px; flex: none; display: flex; align-items: center; padding: 0 0 1px 2px; }
.ptools button { width: 23px; height: 22px; }
.ptools .on { background: #cce4f7; border: 1px solid #99d1ff; }
.ptools i { width: 1px; height: 20px; background: #888; margin: 0 3px 0 2px; }
.ptools .gear { width: 28px; gap: 3px; }
.pgrid { flex: 1; min-height: 0; border: 1px solid #999; display: flex; background: #f0f0f0; }
.scroller { flex: 1; overflow: hidden; padding-top: 1px; }
table { width: 100%; table-layout: fixed; border-collapse: separate; border-spacing: 0; background: #fff; }
.c0 { width: 21px; }
.c1 { width: 109px; }
td, th { height: 16px; padding: 0; line-height: 15px; white-space: pre; overflow: hidden; text-align: left; border-bottom: 1px solid #f0f0f0; vertical-align: middle; }
td:first-child { background: #f0f0f0; }
td:first-child .ico { margin: 0 auto 0 5px; color: #444; }
.sec th { background: #f0f0f0; font-size: 12px; padding-left: 4px; }
.lab { padding-left: 4px; border-right: 1px solid #f0f0f0; }
.val { padding-left: 3px; }
.val.b { font-size: 12px; font-weight: bold; }
.val.s { padding-left: 1px; }
.val i { display: inline-block; width: 20px; height: 13px; border: 1px solid #000; background: #fff; margin-right: 8px; vertical-align: top; }
.pscroll { width: 17px; display: flex; flex-direction: column; align-items: center; padding: 5px 0 5px; color: #444; }
.pscroll .track { flex: 1; width: 15px; padding: 5px 0 4px; }
.pscroll .thumb { height: 72%; background: #cdcdcd; }
.desc { flex: none; height: 59px; margin: 3px 0 3px; border: 1px solid #999; padding: 2px 5px; line-height: 15px; }
.ptabs { height: 25px; flex: none; display: flex; padding-left: 3px; }
.ptabs button { height: 22px; justify-content: flex-start; gap: 8px; padding: 0 6px; }
.ptabs .on { width: 104px; height: 23px; padding: 0 4px; gap: 6px; border-right: 1px solid #c4c4c4; border-bottom: 2px solid #2b579a; color: #2b579a; }

.status { height: 27px; flex: none; background: #636363; color: #fff; display: flex; align-items: center; font: 11px/16px "Noto Sans", sans-serif; }
.status > .first, .status > .ib, .status > label { height: 16px; border-right: 1px solid #999; }
.first { width: 120px; padding: 0 6px 0 11px; justify-content: space-between; }
.ib { width: 27px; }
label { display: flex; align-items: center; gap: 6px; padding: 0 6px 0 4px; }
label input { appearance: none; width: 13px; height: 13px; margin: 0; background: #fff; border: 1px solid #ccc; }
.check { gap: 10px; padding-left: 11px; }
.views { margin-left: auto; display: flex; gap: 7px; }
output { width: 51px; padding-left: 20px; margin-right: 20px; white-space: nowrap; }
.step { width: 9px; height: 12px; position: relative; }
.step::before, .plus::after { content: ""; width: 8px; height: 2px; background: #fff; position: absolute; left: 0; top: 5px; }
.plus::after { width: 2px; height: 8px; left: 3px; top: 2px; }
.range { appearance: none; width: 97px; height: 13px; margin: 0 3px; background: linear-gradient(#fff, #fff) center / 100% 1px no-repeat; }
.range::-webkit-slider-thumb { appearance: none; width: 9px; height: 12px; background: #fff; clip-path: polygon(0 0, 100% 0, 100% 70%, 50% 100%, 0 70%); }
.grip { align-self: flex-end; padding-left: 22px; padding-right: 3px; }
</style>
